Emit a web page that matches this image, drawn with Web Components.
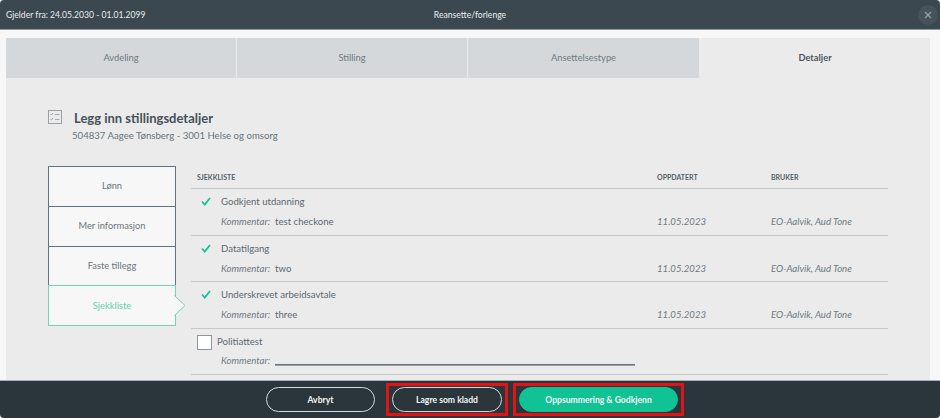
<!DOCTYPE html>
<html lang="no">
<head>
<meta charset="utf-8">
<title>Reansette/forlenge</title>
<style>
  html, body { margin: 0; height: 100%; background: #fff; overflow: hidden; }
  body { font-family: Lato, "Open Sans", sans-serif; font-size: 10px; color: #56616a; }
</style>
</head>
<body>
<app-dialog>
  <span slot="from">Gjelder fra: 24.05.2030 - 01.01.2099</span>
  <span slot="title">Reansette/forlenge</span>

  <tab-bar slot="tabs">
    <tab-item>Avdeling</tab-item>
    <tab-item>Stilling</tab-item>
    <tab-item>Ansettelsestype</tab-item>
    <tab-item active>Detaljer</tab-item>
  </tab-bar>

  <section-heading slot="heading" title="Legg inn stillingsdetaljer" sub="504837 Aagee Tønsberg - 3001 Helse og omsorg"></section-heading>

  <side-nav slot="nav">
    <side-item>Lønn</side-item>
    <side-item>Mer informasjon</side-item>
    <side-item>Faste tillegg</side-item>
    <side-item active>Sjekkliste</side-item>
  </side-nav>

  <check-list slot="list">
    <check-row name="Godkjent utdanning" comment="test checkone" date="11.05.2023" user="EO-Aalvik, Aud Tone"></check-row>
    <check-row name="Datatilgang" comment="two" date="11.05.2023" user="EO-Aalvik, Aud Tone"></check-row>
    <check-row name="Underskrevet arbeidsavtale" comment="three" date="11.05.2023" user="EO-Aalvik, Aud Tone"></check-row>
    <open-row name="Politiattest"></open-row>
  </check-list>

  <pill-button slot="actions">Avbryt</pill-button>
  <marked-box slot="actions" style="margin-left:11px"><pill-button wide>Lagre som kladd</pill-button></marked-box>
  <marked-box slot="actions" style="margin-left:5px"><pill-button primary>Oppsummering &amp; Godkjenn</pill-button></marked-box>
</app-dialog>

<script>
const dialogTemplate = document.createElement('template');
dialogTemplate.innerHTML = `
  <style>
    :host { display: flex; flex-direction: column; height: 418px; border-radius: 4px; overflow: hidden; background: #f7f7f7; }
    header { flex: none; height: 29px; display: grid; grid-template-columns: 1fr auto 1fr; align-items: center;
      background: #3c4850; color: #e9ecee; font-size: 8.6px; padding: 0 6px; border-bottom: 1px solid #8d969c; }
    .close { justify-self: end; width: 20px; height: 20px; border-radius: 50%; background: #46535b; display: flex;
      align-items: center; justify-content: center; margin-right: -4px; }
    main { flex: 1; min-height: 0; padding: 8px 10px 0 6px; }
    .panel { height: 100%; background: #ebebeb; display: flex; flex-direction: column; overflow: hidden; }
    .head { padding: 32px 0 0 42px; height: 56px; flex: none; }
    .cols { display: flex; padding-left: 42px; align-items: flex-start; }
    .nav { flex: none; width: 128px; margin-right: 15px; }
    .list { flex: none; width: 697px; }
    footer { flex: none; height: 38px; background: #2b353c; border-top: 1px solid #a9afb3; display: flex; align-items: center;
      padding-left: 266px; box-sizing: border-box; }
  </style>
  <header>
    <div><slot name="from"></slot></div>
    <div><slot name="title"></slot></div>
    <div class="close">
      <svg width="8" height="8" viewBox="0 0 8 8"><path d="M1 1l6 6M7 1L1 7" stroke="#94a0a8" stroke-width="1.3" fill="none"/></svg>
    </div>
  </header>
  <main>
    <div class="panel">
      <slot name="tabs"></slot>
      <div class="head"><slot name="heading"></slot></div>
      <div class="cols">
        <div class="nav"><slot name="nav"></slot></div>
        <div class="list"><slot name="list"></slot></div>
      </div>
    </div>
  </main>
  <footer><slot name="actions"></slot></footer>
`;

class AppDialog extends HTMLElement {
  constructor() {
    super();
    this.attachShadow({ mode: 'open' }).appendChild(dialogTemplate.content.cloneNode(true));
  }
}

class TabBar extends HTMLElement {
  constructor() {
    super();
    this.attachShadow({ mode: 'open' }).innerHTML = `
      <style>:host { display: grid; grid-template-columns: 230px 230px 231px 231px; column-gap: 1px; height: 40px; }</style>
      <slot></slot>`;
  }
}

class TabItem extends HTMLElement {
  constructor() {
    super();
    this.attachShadow({ mode: 'open' }).innerHTML = `
      <style>
        :host { display: flex; align-items: center; justify-content: center; padding-bottom: 1px; box-sizing: border-box;
          background: #d4d8db; color: #6f7a82; font-size: 9.3px; }
        :host([active]) { background: #ebebeb; color: #4b5760; font-weight: 700; margin-left: -1px; }
      </style>
      <slot></slot>`;
  }
}

class SectionHeading extends HTMLElement {
  constructor() {
    super();
    this.attachShadow({ mode: 'open' }).innerHTML = `
      <style>
        :host { display: flex; align-items: flex-start; }
        svg { flex: none; }
        h2 { margin: 0; font-size: 13px; line-height: 16px; font-weight: 700; color: #45515a; padding-left: 12px; }
        p { margin: 4px 0 0 10px; font-size: 9.6px; line-height: 12px; color: #69747c; }
      </style>
      <svg width="14" height="14" viewBox="0 0 14 14" fill="none" stroke="#9aa1a6">
        <rect x=".5" y=".5" width="13" height="13"/>
        <path d="M2.500 4l1 1 1.500-2M7 4.500h4.500M2.500 9l1 1 1.500-2M7 9.500h4.500" stroke-width=".9"/>
      </svg>
      <div>
        <h2></h2>
        <p></p>
      </div>`;
    this.$title = this.shadowRoot.querySelector('h2');
    this.$sub = this.shadowRoot.querySelector('p');
  }

  connectedCallback() {
    this.$title.textContent = this.getAttribute('title') || '';
    this.$sub.textContent = this.getAttribute('sub') || '';
  }
}

class SideNav extends HTMLElement {
  constructor() {
    super();
    this.attachShadow({ mode: 'open' }).innerHTML = `
      <style>:host { display: flex; flex-direction: column; }</style>
      <slot></slot>`;
  }
}

class SideItem extends HTMLElement {
  constructor() {
    super();
    this.attachShadow({ mode: 'open' }).innerHTML = `
      <style>
        :host { display: flex; position: relative; align-items: center; justify-content: center; box-sizing: border-box; height: 40.75px; margin-top: -1px;
          padding-bottom: 1px; background: #f7f7f7; border: 1px solid #66727b; color: #6b767e; font-size: 9.3px; }
        :host(:first-child) { margin-top: 0; }
        :host([active]) { border-color: #6fd6b8; color: #5fd0ae; }
        svg { display: none; position: absolute; left: 100%; top: 9px; margin-left: -1px; }
        :host([active]) svg { display: block; }
      </style>
      <slot></slot>
      <svg width="12" height="21" viewBox="0 0 12 21"><path d="M0.500 0.500L11 10.500 0.500 20.500" fill="#f7f7f7" stroke="#6fd6b8"/></svg>`;
  }
}

class CheckList extends HTMLElement {
  constructor() {
    super();
    this.attachShadow({ mode: 'open' }).innerHTML = `
      <style>
        :host { display: block; }
        .top { display: grid; grid-template-columns: 460px 114px 1fr; align-items: center; font-size: 7px; font-weight: 700;
          color: #56616a; text-transform: uppercase; padding: 0 0 1px 6px; border-bottom: 1px solid #c5c9cb; box-sizing: border-box; height: 23px; }
      </style>
      <div class="top"><span>Sjekkliste</span><span>Oppdatert</span><span>Bruker</span></div>
      <slot></slot>`;
  }
}

const rowStyles = `
  :host { display: block; box-sizing: border-box; border-bottom: 1px solid #c5c9cb; color: #5e6971; font-size: 9.6px; }
  i { font-style: italic; color: #6f7a82; }
`;

class CheckRow extends HTMLElement {
  constructor() {
    super();
    this.attachShadow({ mode: 'open' }).innerHTML = `
      <style>
        ${rowStyles}
        :host { height: 46.67px; }
        .grid { display: grid; grid-template-columns: 30px 436px 114px 1fr; grid-template-rows: 24px 16px; align-items: center; padding-top: 0.6px; }
        svg { margin-left: 10px; }
        b { font-weight: 400; }
        .c2 { grid-column: 2; } .c3 { grid-column: 3; } .c4 { grid-column: 4; }
      </style>
      <div class="grid">
        <svg width="10" height="9" viewBox="0 0 10 9"><path d="M1 4.500l2.800 3L9 1" fill="none" stroke="#14c295" stroke-width="1.800"/></svg>
        <b id="name"></b>
        <span class="c2"><i>Kommentar:</i>&nbsp; <span id="comment"></span></span>
        <i class="c3" id="date"></i>
        <i class="c4" id="user"></i>
      </div>`;
  }

  connectedCallback() {
    for (const key of ['name', 'comment', 'date', 'user']) {
      this.shadowRoot.getElementById(key).textContent = this.getAttribute(key) || '';
    }
  }
}

class OpenRow extends HTMLElement {
  constructor() {
    super();
    this.attachShadow({ mode: 'open' }).innerHTML = `
      <style>
        ${rowStyles}
        :host { height: 46px; padding: 6px 0 0 6px; }
        .a { display: flex; align-items: flex-start; gap: 5px; line-height: 13px; }
        .box { width: 13px; height: 13px; background: #fff; border: 1px solid #8f979d; }
        .b { display: flex; margin: 3px 0 0 24px; align-items: flex-end; height: 13px; }
        .line { width: 360px; height: 1px; margin-left: 5px; background: #66727b; border-bottom: 1px solid #9aa2a8; }
      </style>
      <div class="a"><div class="box"></div><span id="name"></span></div>
      <div class="b"><i>Kommentar:</i><div class="line"></div></div>`;
  }

  connectedCallback() {
    this.shadowRoot.getElementById('name').textContent = this.getAttribute('name') || '';
  }
}

class MarkedBox extends HTMLElement {
  constructor() {
    super();
    this.attachShadow({ mode: 'open' }).innerHTML = `
      <style>:host { display: flex; height: 33px; box-sizing: border-box; align-items: center; padding: 0 3px; border: 3px solid #e01414; }</style>
      <slot></slot>`;
  }
}

class PillButton extends HTMLElement {
  constructor() {
    super();
    this.attachShadow({ mode: 'open' }).innerHTML = `
      <style>
        :host { display: flex; align-items: center; justify-content: center; box-sizing: border-box; width: 109px; height: 25px;
          border: 1px solid #d5d8da; border-radius: 13px; color: #f3f5f6; font-size: 8.6px; font-weight: 700; }
        :host([wide]) { width: 110px; }
        :host([primary]) { width: 159px; background: #10c294; border-color: #10c294; }
      </style>
      <slot></slot>`;
  }
}

customElements.define('app-dialog', AppDialog);
customElements.define('tab-bar', TabBar);
customElements.define('tab-item', TabItem);
customElements.define('section-heading', SectionHeading);
customElements.define('side-nav', SideNav);
customElements.define('side-item', SideItem);
customElements.define('check-list', CheckList);
customElements.define('check-row', CheckRow);
customElements.define('open-row', OpenRow);
customElements.define('marked-box', MarkedBox);
customElements.define('pill-button', PillButton);
</script>
</body>
</html>
